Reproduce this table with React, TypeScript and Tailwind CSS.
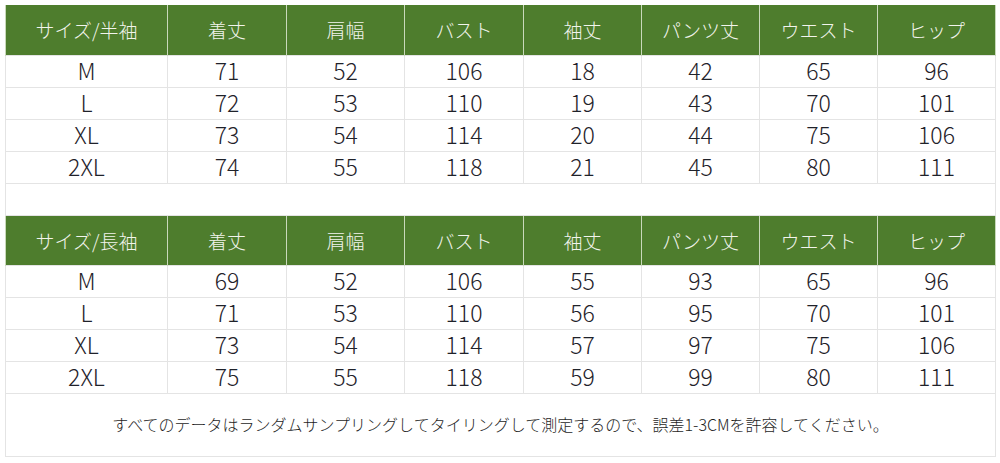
import React from "react";

const headers1 = ["サイズ/半袖", "着丈", "肩幅", "バスト", "袖丈", "パンツ丈", "ウエスト", "ヒップ"];
const headers2 = ["サイズ/長袖", "着丈", "肩幅", "バスト", "袖丈", "パンツ丈", "ウエスト", "ヒップ"];
const rows1 = [
  ["M", "71", "52", "106", "18", "42", "65", "96"],
  ["L", "72", "53", "110", "19", "43", "70", "101"],
  ["XL", "73", "54", "114", "20", "44", "75", "106"],
  ["2XL", "74", "55", "118", "21", "45", "80", "111"],
];
const rows2 = [
  ["M", "69", "52", "106", "55", "93", "65", "96"],
  ["L", "71", "53", "110", "56", "95", "70", "101"],
  ["XL", "73", "54", "114", "57", "97", "75", "106"],
  ["2XL", "75", "55", "118", "59", "99", "80", "111"],
];

function Header({ cells }: { cells: string[] }) {
  return (
    <tr className="h-[50px] bg-[#4e7d2d]">
      {cells.map((c, i) => (
        <td
          key={i}
          className="border-x border-[#c9d9bb] text-center text-[19px] font-light text-[#f2f4ec] p-0 leading-none"
        >
          {c}
        </td>
      ))}
    </tr>
  );
}

function Row({ cells }: { cells: string[] }) {
  return (
    <tr className="h-[32px]">
      {cells.map((c, i) => (
        <td
          key={i}
          className="border border-[#e4e4e4] text-center text-[23px] font-light text-[#1f222a] p-0 pb-[2px] leading-none"
        >
          {c}
        </td>
      ))}
    </tr>
  );
}

export default function App() {
  return (
    <div
      className="w-[1000px] h-[463px] bg-white pl-[5px] pt-[5px]"
      style={{ fontFamily: '"Noto Sans CJK JP", "Noto Sans", sans-serif' }}
    >
      <table className="table-fixed border-collapse w-[990px]">
        <colgroup>
          <col className="w-[162px]" />
          <col className="w-[119px]" />
          <col className="w-[118px]" />
          <col className="w-[119px]" />
          <col className="w-[118px]" />
          <col className="w-[118px]" />
          <col className="w-[118px]" />
          <col className="w-[118px]" />
        </colgroup>
        <tbody>
          <Header cells={headers1} />
          {rows1.map((r, i) => (
            <Row key={i} cells={r} />
          ))}
          <tr className="h-[32px]">
            <td colSpan={8} className="border border-[#e4e4e4] p-0"></td>
          </tr>
          <Header cells={headers2} />
          {rows2.map((r, i) => (
            <Row key={i} cells={r} />
          ))}
          <tr className="h-[63px]">
            <td
              colSpan={8}
              className="border border-[#e4e4e4] text-center text-[16px] font-light text-[#1e1e1e] p-0 pb-[2px]"
            >
              すべてのデータはランダムサンプリングしてタイリングして測定するので、誤差1-3CMを許容してください。
            </td>
          </tr>
        </tbody>
      </table>
    </div>
  );
}
